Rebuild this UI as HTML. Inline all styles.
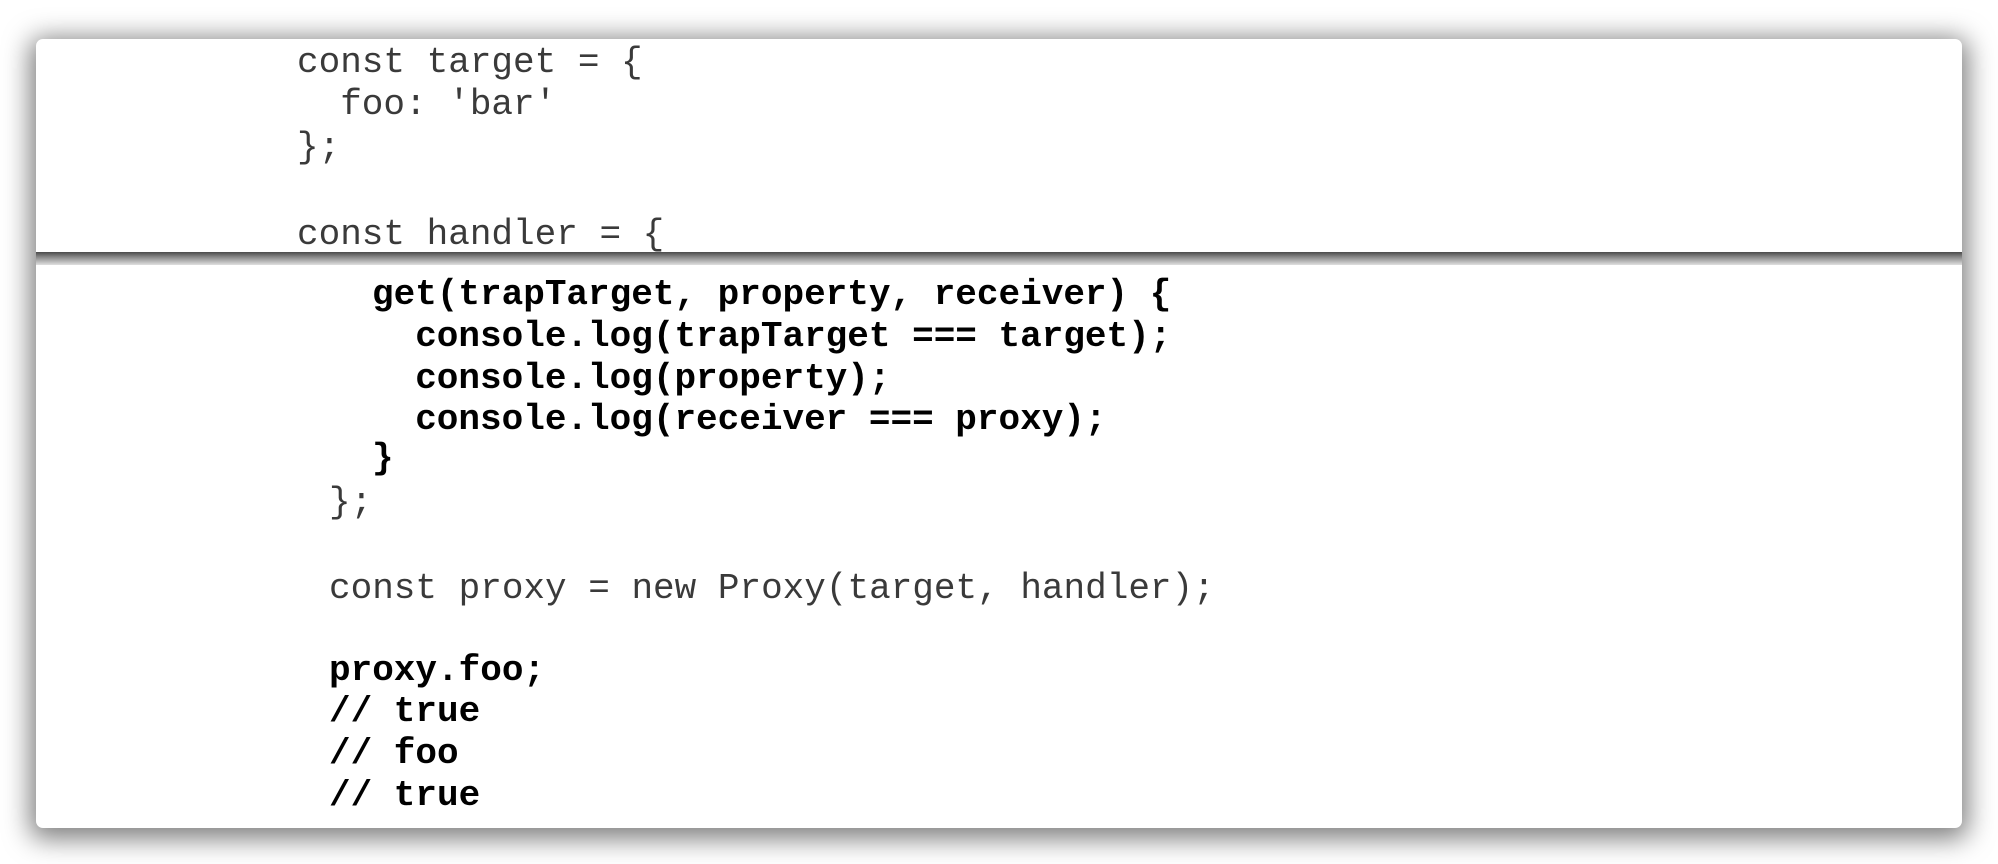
<!DOCTYPE html>
<html><head><meta charset="utf-8"><style>
html,body{margin:0;padding:0;background:#fff;width:1998px;height:864px;overflow:hidden;position:relative}
.card{position:absolute;left:36px;top:39px;width:1926px;height:789px;background:#fff;border-radius:7px;box-shadow:0 5px 26px 6px rgba(0,0,0,0.5);overflow:hidden}
.band{position:absolute;left:0;top:213px;width:100%;height:13px;background:linear-gradient(#4a4a4a,#8a8a8a 40%,#e0e0e0)}
.l{position:absolute;font-family:"Liberation Mono","Courier New",monospace;font-size:36px;line-height:42px;white-space:pre;color:#1a1a1a}
.t{font-weight:normal;color:#3a3a3a}
.b{font-weight:bold;color:#000}
</style></head><body>
<div class="card">
<div class="band"></div>
</div>
<div class="l t" style="left:297px;top:42px">const target = {</div>
<div class="l t" style="left:297px;top:84px">  foo: 'bar'</div>
<div class="l t" style="left:297px;top:127px">};</div>
<div class="l t" style="left:297px;top:214px">const handler = {</div>
<div class="l b" style="left:372px;top:274px">get(trapTarget, property, receiver) {</div>
<div class="l b" style="left:372px;top:316px">  console.log(trapTarget === target);</div>
<div class="l b" style="left:372px;top:358px">  console.log(property);</div>
<div class="l b" style="left:372px;top:399px">  console.log(receiver === proxy);</div>
<div class="l b" style="left:372px;top:438px">}</div>
<div class="l t" style="left:329px;top:482px">};</div>
<div class="l t" style="left:329px;top:568px">const proxy = new Proxy(target, handler);</div>
<div class="l b" style="left:329px;top:650px">proxy.foo;</div>
<div class="l b" style="left:329px;top:691px">// true</div>
<div class="l b" style="left:329px;top:733px">// foo</div>
<div class="l b" style="left:329px;top:775px">// true</div>
</body></html>
